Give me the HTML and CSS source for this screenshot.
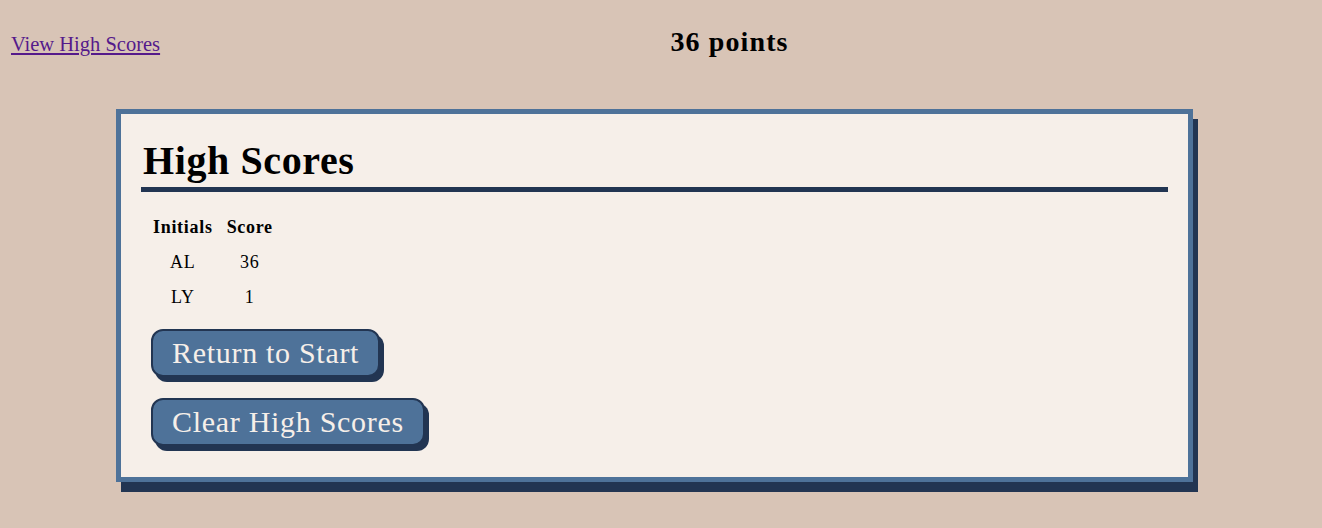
FILE: index.html
```html
<!DOCTYPE html>
<html>

<head>
    <meta charset="UTF-8">
    <title>High Scores</title>
    <link rel="stylesheet" href="styles.css">
</head>

<body>
    <header class="topbar">
        <a href="#" class="scores-link">View High Scores</a>
        <h2 class="points">36 points</h2>
    </header>

    <section class="panel">
        <h1 class="panel-title">High Scores</h1>

        <table class="score-table">
            <tr>
                <th>Initials</th>
                <th>Score</th>
            </tr>
            <tr>
                <td>AL</td>
                <td>36</td>
            </tr>
            <tr>
                <td>LY</td>
                <td>1</td>
            </tr>
        </table>

        <button class="btn" id="returnButton">Return to Start</button>
        <button class="btn" id="clearButton">Clear High Scores</button>
    </section>
</body>

</html>
```

FILE: styles.css
```css
body {
    font-family: "Liberation Serif", "Times New Roman", serif;
    background-color: #d8c4b6;
    margin: 0;
    padding-bottom: 36px;
    color: #000;
}

.topbar {
    display: flex;
    align-items: baseline;
    padding: 26px 23px 0 11px;
    line-height: 32px;
}

.scores-link {
    font-size: 20.5px;
    color: #551a8b;
    text-decoration: underline;
}

.points {
    flex: 1;
    margin: 0;
    text-align: center;
    font-size: 28px;
    letter-spacing: 1.1px;
    font-weight: bold;
}

.panel {
    box-sizing: border-box;
    width: 1077px;
    margin: 49px 0 0 116px;
    padding: 0 20px 31px 20px;
    background-color: #f6efe9;
    border: 5px solid #4e7299;
    box-shadow: 5px 10px 0 #223552;
}

.panel-title {
    margin: 0;
    padding: 24px 0 3px 2px;
    font-size: 40px;
    line-height: 46px;
    letter-spacing: 0.6px;
    border-bottom: 5px solid #223552;
}

.score-table {
    margin: 18px 0 0 4px;
    border-spacing: 2px 0;
    font-size: 18px;
    letter-spacing: 0.7px;
}

.score-table th,
.score-table td {
    padding: 0 6px;
    line-height: 35px;
    text-align: center;
}

.btn {
    display: block;
    margin: 14px 0 0 10px;
    padding: 5px 19px;
    font-family: inherit;
    font-size: 30px;
    line-height: 34px;
    letter-spacing: 0.7px;
    color: #f6efe9;
    background-color: #4e7299;
    border: 2px solid #223552;
    border-radius: 12px;
    box-shadow: 4px 5px 0 #223552;
    cursor: pointer;
}

#clearButton {
    margin-top: 21px;
}
```
